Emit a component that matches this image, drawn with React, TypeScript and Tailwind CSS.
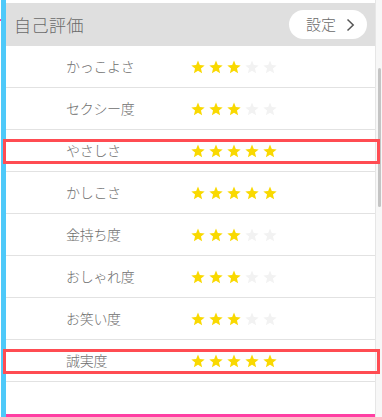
import React from "react";

const rows: { label: string; n: number }[] = [
  { label: "かっこよさ", n: 3 },
  { label: "セクシー度", n: 3 },
  { label: "やさしさ", n: 5 },
  { label: "かしこさ", n: 5 },
  { label: "金持ち度", n: 3 },
  { label: "おしゃれ度", n: 3 },
  { label: "お笑い度", n: 3 },
  { label: "誠実度", n: 5 },
];

function Star({ on }: { on: boolean }) {
  return (
    <svg width="14" height="14" viewBox="0 0 24 24" className="block">
      <polygon
        points="12,1 15.1,8.6 23.4,9.3 17.1,14.7 19,22.8 12,18.5 5,22.8 6.9,14.7 0.6,9.3 8.9,8.6"
        fill={on ? "#f9d900" : "#f2f2f2"}
      />
    </svg>
  );
}

export default function App() {
  return (
    <div
      className="relative w-[382px] h-[417px] bg-white flex overflow-hidden"
      style={{ fontFamily: '"Noto Sans CJK JP", "Noto Sans", sans-serif' }}
    >
      <div className="w-[1px]" />
      <div className="w-[5px] h-full bg-[#4ec9f9]" />
      <div className="w-[369px] h-full flex flex-col pt-[3px]">
        <div className="h-[43px] bg-[#dfdfdf] flex items-center justify-between pl-[8px] pr-[8px]">
          <span className="text-[17px] font-light text-[#6a6a6a] tracking-[0.5px]">自己評価</span>
          <div className="w-[78px] h-[29px] rounded-full bg-white flex items-center pl-[17px] gap-[10px]">
            <span className="text-[15px] font-light text-[#6a6a6a]">設定</span>
            <svg width="9" height="14" viewBox="0 0 9 14">
              <polyline points="1.5,1.5 7.2,7 1.5,12.5" fill="none" stroke="#555" strokeWidth="1.5" />
            </svg>
          </div>
        </div>
        {rows.map((r) => (
          <div key={r.label} className="h-[42px] border-b border-[#e2e2e2] flex items-center">
            <div className="w-[185px] pl-[60px] text-[14px] font-light text-[#6e6e6e] tracking-[-0.3px]">{r.label}</div>
            <div className="flex gap-[4px]">
              {[0, 1, 2, 3, 4].map((i) => (
                <Star key={i} on={i < r.n} />
              ))}
            </div>
          </div>
        ))}
        <div className="flex-1" />
        <div className="h-[3px] bg-[#ff3fa3]" />
      </div>
      <div className="w-[7px] h-full bg-[#f7f7f7] border-l border-[#e6e6e6] pt-[68px] pl-[2px]">
        <div className="w-[3px] h-[139px] bg-[#c4c4c4] rounded-sm" />
      </div>
      <div className="absolute left-0 top-[19px] w-[1px] h-[2px] bg-[#ff3fa3]" />
      <div className="absolute left-[3px] top-[139px] w-[377px] h-[25px] border-[3px] border-[#ff4c52]" />
      <div className="absolute left-[3px] top-[349px] w-[377px] h-[25px] border-[3px] border-[#ff4c52]" />
    </div>
  );
}
